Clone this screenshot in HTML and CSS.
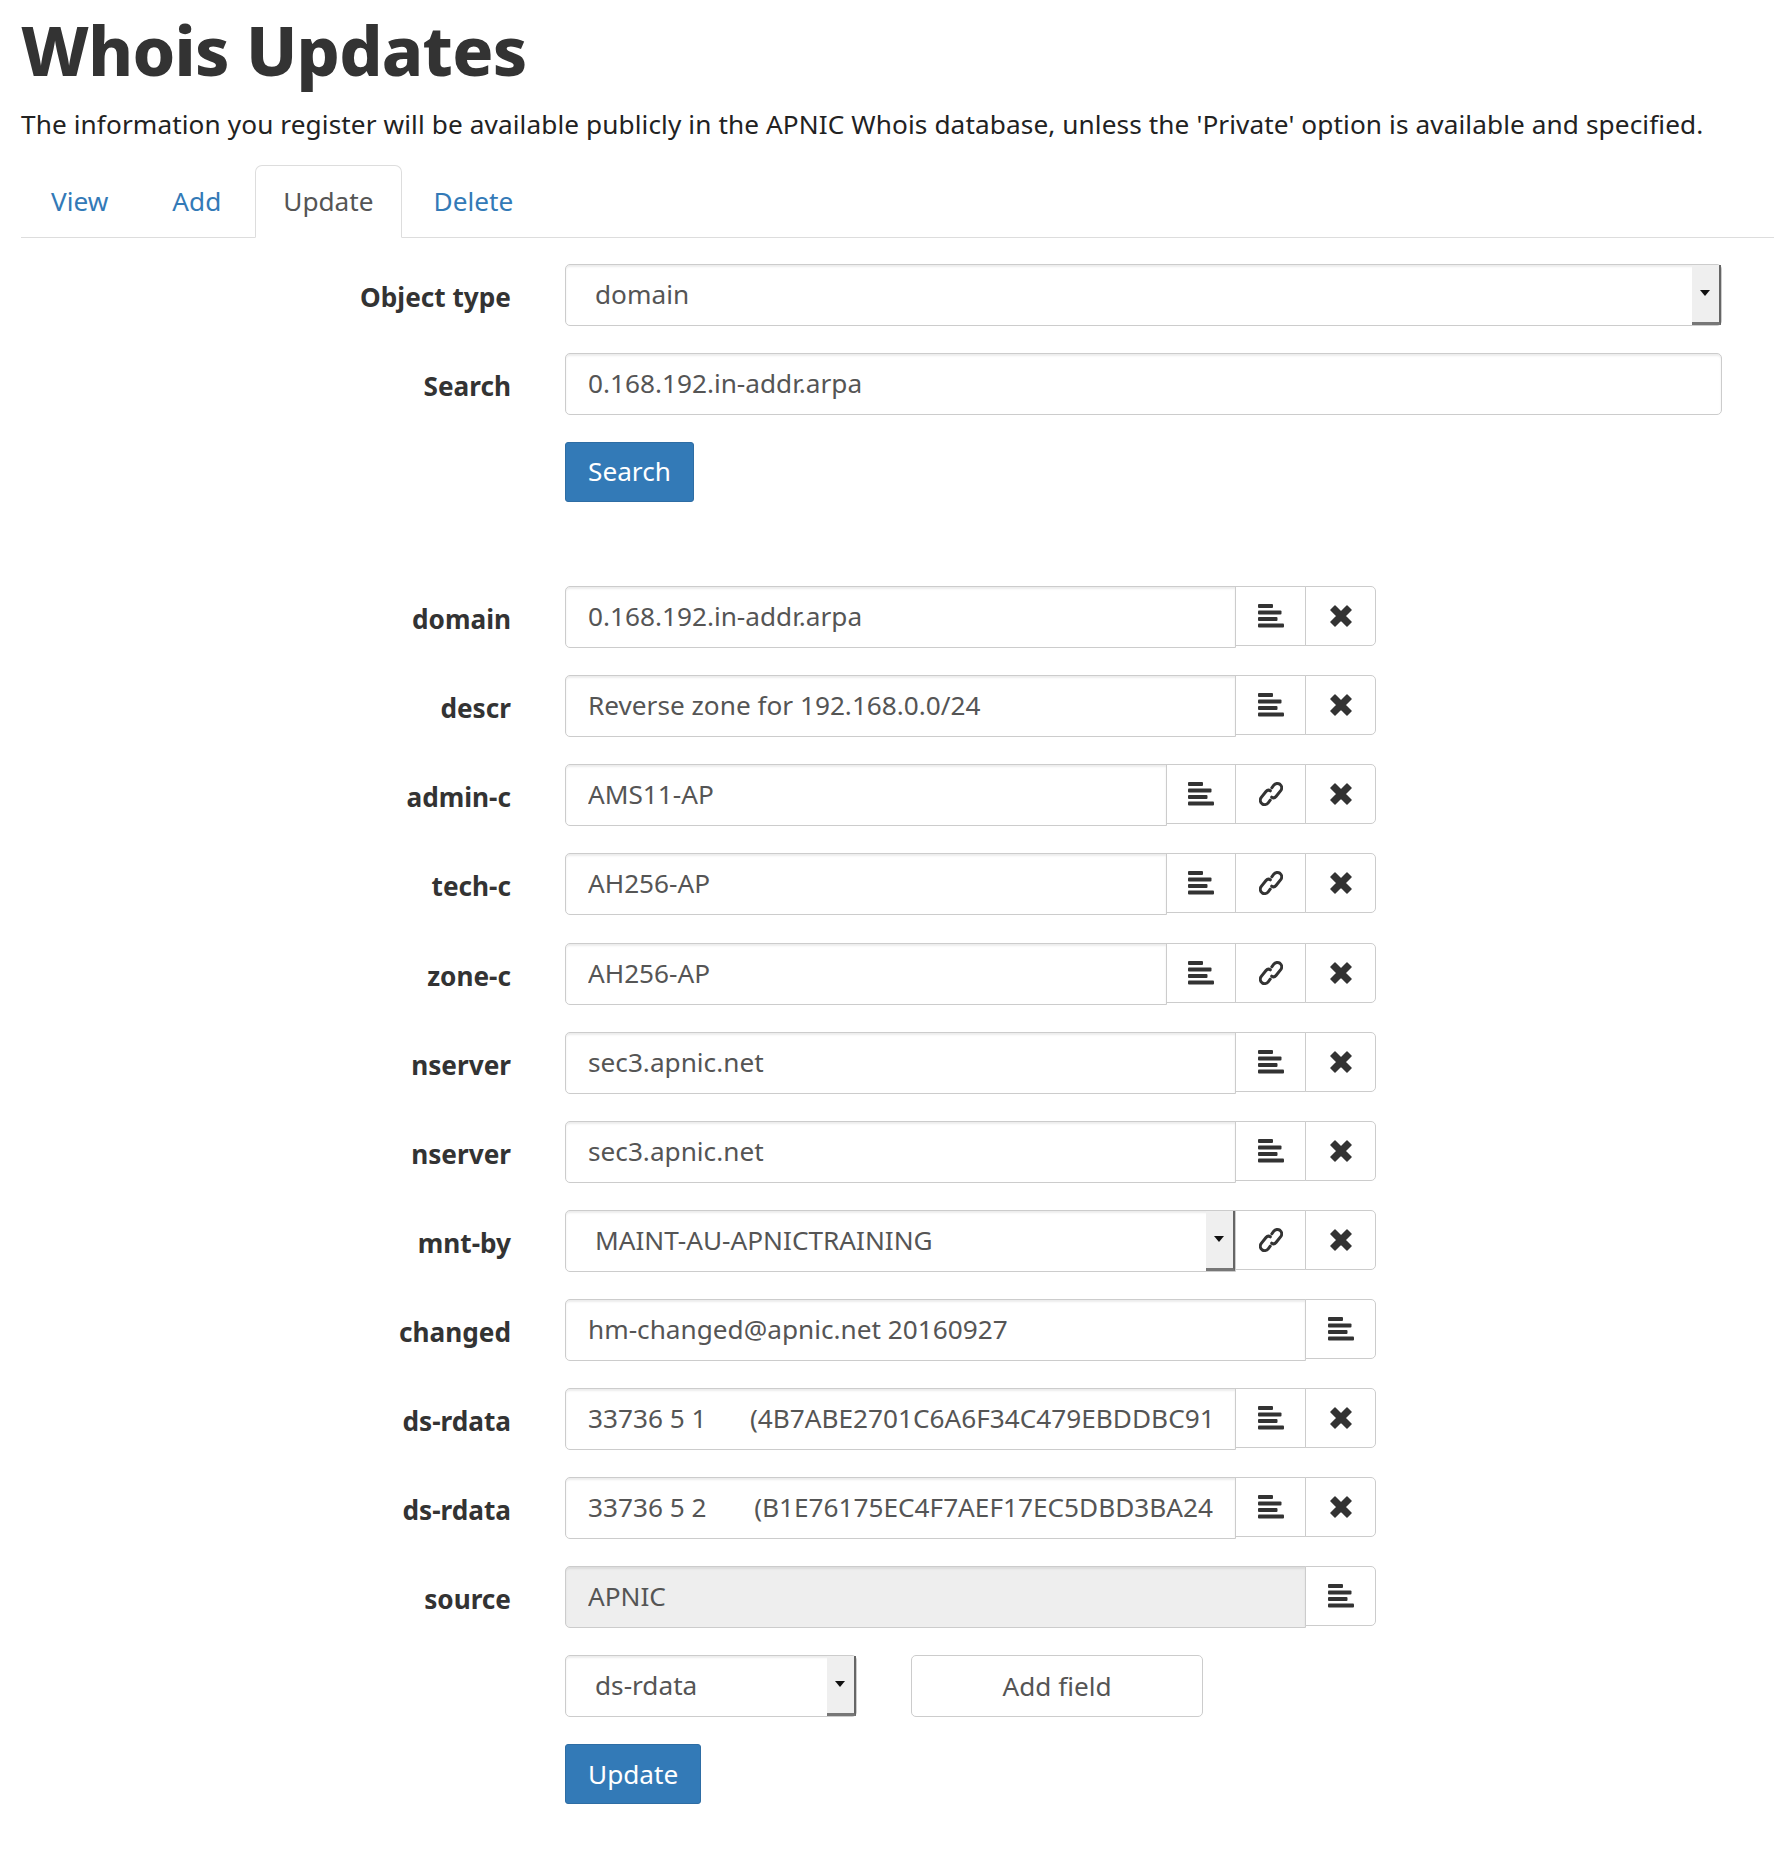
FILE: index.html
```html
<!DOCTYPE html>
<html lang="en">
<head>
  <meta charset="UTF-8">
  <meta name="viewport" content="width=device-width, initial-scale=1.0">
  <title>Whois Updates</title>
  <link rel="stylesheet" href="styles.css">
</head>
<body>
  <svg class="icon-defs" width="0" height="0">
    <symbol id="i-lines" viewBox="0 0 26 24">
      <rect x="0" y="0" width="15" height="4" rx="1"/>
      <rect x="0" y="6.5" width="23.5" height="4" rx="1"/>
      <rect x="0" y="13" width="19.5" height="4" rx="1"/>
      <rect x="0" y="19.5" width="26" height="4" rx="1"/>
    </symbol>
    <symbol id="i-remove" viewBox="0 0 22 22">
      <path d="M5 1 11 7 17 1 21 5 15 11 21 17 17 21 11 15 5 21 1 17 7 11 1 5Z" stroke-linejoin="round" stroke-width="1.5" stroke="#333"/>
    </symbol>
    <symbol id="i-link" viewBox="0 0 24 26">
      <path d="M12.8 6.8 14.8 4.2C16.3 2.2 19 1.8 21 3.3 23 4.9 23.2 7.6 21.7 9.6L17 15.5C15.6 17.2 14 17.2 12.7 16.2" fill="none" stroke="#333" stroke-width="3" stroke-linecap="round"/>
      <path d="M11.2 19.2 9.2 21.8C7.7 23.8 5 24.2 3 22.7 1 21.1 .8 18.4 2.3 16.4L7 10.5C8.4 8.8 10 8.8 11.3 9.8" fill="none" stroke="#333" stroke-width="3" stroke-linecap="round"/>
    </symbol>
  </svg>

  <h1 class="page-title">Whois Updates</h1>
  <p class="intro">The information you register will be available publicly in the APNIC Whois database, unless the 'Private' option is available and specified.</p>

  <ul class="tabs">
    <li><a href="#">View</a></li>
    <li><a href="#">Add</a></li>
    <li class="active"><a href="#">Update</a></li>
    <li><a href="#">Delete</a></li>
  </ul>

  <form class="whois-form">
    <div class="form-row wide">
      <label>Object type</label>
      <div class="select-wrap">
        <select><option>domain</option></select>
        <span class="select-arrow"></span>
      </div>
    </div>
    <div class="form-row wide">
      <label>Search</label>
      <input class="field" type="text" value="0.168.192.in-addr.arpa">
    </div>
    <div class="form-row wide">
      <span></span>
      <div><button type="button" class="btn-primary">Search</button></div>
    </div>

    <div class="form-row spaced">
      <label>domain</label>
      <div class="input-group">
        <input class="field" type="text" value="0.168.192.in-addr.arpa">
        <span class="addon"><svg class="ic-lines"><use href="#i-lines"/></svg></span>
        <span class="addon"><svg class="ic-remove"><use href="#i-remove"/></svg></span>
      </div>
    </div>
    <div class="form-row">
      <label>descr</label>
      <div class="input-group">
        <input class="field" type="text" value="Reverse zone for 192.168.0.0/24">
        <span class="addon"><svg class="ic-lines"><use href="#i-lines"/></svg></span>
        <span class="addon"><svg class="ic-remove"><use href="#i-remove"/></svg></span>
      </div>
    </div>
    <div class="form-row">
      <label>admin-c</label>
      <div class="input-group">
        <input class="field" type="text" value="AMS11-AP">
        <span class="addon"><svg class="ic-lines"><use href="#i-lines"/></svg></span>
        <span class="addon"><svg class="ic-link"><use href="#i-link"/></svg></span>
        <span class="addon"><svg class="ic-remove"><use href="#i-remove"/></svg></span>
      </div>
    </div>
    <div class="form-row">
      <label>tech-c</label>
      <div class="input-group">
        <input class="field" type="text" value="AH256-AP">
        <span class="addon"><svg class="ic-lines"><use href="#i-lines"/></svg></span>
        <span class="addon"><svg class="ic-link"><use href="#i-link"/></svg></span>
        <span class="addon"><svg class="ic-remove"><use href="#i-remove"/></svg></span>
      </div>
    </div>
    <div class="form-row">
      <label>zone-c</label>
      <div class="input-group">
        <input class="field" type="text" value="AH256-AP">
        <span class="addon"><svg class="ic-lines"><use href="#i-lines"/></svg></span>
        <span class="addon"><svg class="ic-link"><use href="#i-link"/></svg></span>
        <span class="addon"><svg class="ic-remove"><use href="#i-remove"/></svg></span>
      </div>
    </div>
    <div class="form-row">
      <label>nserver</label>
      <div class="input-group">
        <input class="field" type="text" value="sec3.apnic.net">
        <span class="addon"><svg class="ic-lines"><use href="#i-lines"/></svg></span>
        <span class="addon"><svg class="ic-remove"><use href="#i-remove"/></svg></span>
      </div>
    </div>
    <div class="form-row">
      <label>nserver</label>
      <div class="input-group">
        <input class="field" type="text" value="sec3.apnic.net">
        <span class="addon"><svg class="ic-lines"><use href="#i-lines"/></svg></span>
        <span class="addon"><svg class="ic-remove"><use href="#i-remove"/></svg></span>
      </div>
    </div>
    <div class="form-row">
      <label>mnt-by</label>
      <div class="input-group">
        <div class="select-wrap">
          <select><option>MAINT-AU-APNICTRAINING</option></select>
          <span class="select-arrow"></span>
        </div>
        <span class="addon"><svg class="ic-link"><use href="#i-link"/></svg></span>
        <span class="addon"><svg class="ic-remove"><use href="#i-remove"/></svg></span>
      </div>
    </div>
    <div class="form-row">
      <label>changed</label>
      <div class="input-group">
        <input class="field" type="text" value="hm-changed@apnic.net 20160927">
        <span class="addon"><svg class="ic-lines"><use href="#i-lines"/></svg></span>
      </div>
    </div>
    <div class="form-row">
      <label>ds-rdata</label>
      <div class="input-group">
        <input class="field" type="text" value="33736 5 1 &#160;&#160;&#160;&#160;&#8202; (4B7ABE2701C6A6F34C479EBDDBC9120C4F5A7C3E">
        <span class="addon"><svg class="ic-lines"><use href="#i-lines"/></svg></span>
        <span class="addon"><svg class="ic-remove"><use href="#i-remove"/></svg></span>
      </div>
    </div>
    <div class="form-row">
      <label>ds-rdata</label>
      <div class="input-group">
        <input class="field" type="text" value="33736 5 2 &#160;&#160;&#160;&#160;&#160; (B1E76175EC4F7AEF17EC5DBD3BA24IE0A7C3F28D">
        <span class="addon"><svg class="ic-lines"><use href="#i-lines"/></svg></span>
        <span class="addon"><svg class="ic-remove"><use href="#i-remove"/></svg></span>
      </div>
    </div>
    <div class="form-row">
      <label>source</label>
      <div class="input-group">
        <input class="field" type="text" value="APNIC" readonly>
        <span class="addon"><svg class="ic-lines"><use href="#i-lines"/></svg></span>
      </div>
    </div>
    <div class="form-row">
      <span></span>
      <div class="add-row">
        <div class="select-wrap add-select">
          <select><option>ds-rdata</option></select>
          <span class="select-arrow"></span>
        </div>
        <button type="button" class="btn-default">Add field</button>
      </div>
    </div>
    <div class="form-row">
      <span></span>
      <div><button type="button" class="btn-primary">Update</button></div>
    </div>
  </form>
</body>
</html>
```

FILE: styles.css
```css
body {
  margin: 0;
  padding: 0 0 0 21px;
  background: #fff;
  color: #333;
  font-family: "Noto Sans", "Open Sans", sans-serif;
  font-size: 26.2px;
  line-height: 1.43;
  overflow-x: hidden;
}

.icon-defs {
  position: absolute;
}

.page-title {
  margin: 0;
  padding-top: 12px;
  font-size: 68px;
  font-weight: 800;
  line-height: 75px;
  letter-spacing: -0.7px;
}

.intro {
  margin: 19px 0 0;
  color: #222;
  line-height: 36px;
  letter-spacing: 0.1px;
}

.tabs {
  display: flex;
  margin: 23px 0 0;
  padding: 0;
  list-style: none;
  border-bottom: 1px solid #ddd;
  height: 72px;
}

.tabs li {
  margin-right: 4px;
  margin-bottom: -1px;
}

.tabs a {
  display: block;
  height: 73px;
  box-sizing: border-box;
  padding: 17px 29px 0;
  border: 1px solid transparent;
  border-radius: 7px 7px 0 0;
  color: #337ab7;
  text-decoration: none;
}

.tabs .active {
  margin-right: 3px;
}

.tabs .active a {
  padding: 17px 27px 0;
  border-color: #ddd;
  border-bottom-color: #fff;
  background: #fff;
  color: #555;
}

.tabs .active + li a {
  padding-left: 28px;
}

.whois-form {
  margin-top: 26px;
  width: 1700px;
}

.form-row {
  display: grid;
  grid-template-columns: 490px 811px;
  column-gap: 54px;
  margin-bottom: 27.1px;
}

.form-row.wide {
  grid-template-columns: 490px 1156.5px;
}

.form-row.spaced {
  margin-top: 84px;
}

.form-row label {
  font-weight: 700;
  text-align: right;
  padding-top: 15px;
  line-height: 36px;
}

.field,
.select-wrap select {
  display: block;
  width: 100%;
  height: 62px;
  box-sizing: border-box;
  padding: 0 22px 2px;
  border: 1px solid #ccc;
  border-radius: 5px;
  background: #fff;
  box-shadow: inset 0 2px 2px rgba(0, 0, 0, 0.075);
  color: #555;
  font: inherit;
  outline: none;
}

.field[readonly] {
  background: #eee;
}

.select-wrap {
  position: relative;
  min-width: 0;
}

.select-wrap select {
  appearance: none;
  padding-left: 29px;
  padding-bottom: 1px;
}

/* the little native-looking spinner at the right of selects */
.select-arrow {
  position: absolute;
  top: 1px;
  right: 1px;
  bottom: 1px;
  width: 29px;
  background: #efefef;
  border-right: 2px solid #666;
  border-bottom: 3px solid #777;
  box-sizing: border-box;
  pointer-events: none;
}

.select-arrow::after {
  content: "";
  position: absolute;
  top: 25px;
  left: 8px;
  border-left: 5.5px solid transparent;
  border-right: 5.5px solid transparent;
  border-top: 6px solid #111;
}

.input-group {
  display: flex;
  height: 62px;
}

.input-group .field,
.input-group .select-wrap {
  flex: 1;
  min-width: 0;
}

.input-group .field,
.input-group .select-wrap select {
  border-radius: 5px 0 0 5px;
}

.addon {
  flex: 0 0 70.8px;
  display: flex;
  justify-content: center;
  align-items: center;
  box-sizing: border-box;
  height: 60px;
  margin-left: -1px;
  border: 1px solid #ccc;
  background: #fff;
}

.addon:last-child {
  border-radius: 0 5px 5px 0;
}

.addon svg {
  fill: #333;
}

.ic-lines {
  width: 26px;
  height: 24px;
}

.ic-remove {
  width: 22px;
  height: 22px;
}

.ic-link {
  width: 24px;
  height: 26px;
}

.btn-primary,
.btn-default {
  height: 60px;
  padding: 0 22px;
  border: 1px solid #2e6da4;
  border-radius: 3px;
  background: #337ab7;
  color: #fff;
  font: inherit;
}

.btn-default {
  width: 292px;
  height: 62px;
  border-color: #ccc;
  border-radius: 5px;
  background: #fff;
  color: #555;
}

.add-row {
  display: flex;
  gap: 54px;
}

.add-select {
  width: 292px;
}
```
